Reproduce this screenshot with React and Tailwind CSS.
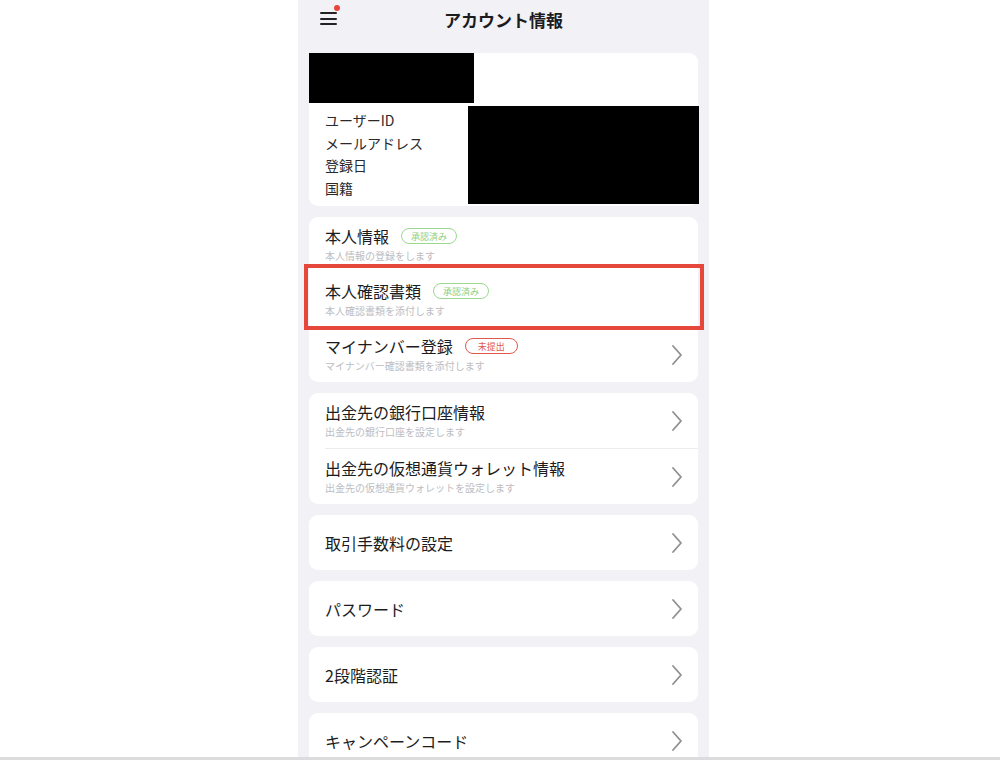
import React from 'react';

const font = { fontFamily: '"Noto Sans CJK JP", "Noto Sans", sans-serif' };

const Chevron = () => (
  <svg width="12" height="22" viewBox="0 0 12 22" className="shrink-0">
    <path d="M2 2 L10 11 L2 20" fill="none" stroke="#8e8e93" strokeWidth="1.8" strokeLinecap="round" strokeLinejoin="round" />
  </svg>
);

const Badge = ({ tone, children }) => (
  <span
    className={
      tone === 'green'
        ? 'ml-[12px] inline-flex h-[16px] items-center rounded-full border border-[#9ad98f] px-[9px] text-[9px] leading-none text-[#8fd183]'
        : 'ml-[12px] inline-flex h-[16px] items-center rounded-full border-[1.5px] border-[#e0574c] px-[12px] text-[9px] leading-none text-[#e0574c]'
    }
  >
    {children}
  </span>
);

const Row = ({ title, sub, badge, chevron = true, highlight = false }) => (
  <div className="relative flex h-[55px] items-center pl-[16px] pr-[15px]">
    <div className="flex flex-1 flex-col">
      <div className="flex items-center">
        <span className="text-[16px] leading-[20px] text-[#1c1c1e]">{title}</span>
        {badge}
      </div>
      {sub && <span className="mt-[3px] text-[10px] leading-[14px] text-[#bdbdc2]">{sub}</span>}
    </div>
    {chevron && <Chevron />}
    {highlight && (
      <div className="absolute -left-[5px] -right-[6px] -top-[8px] -bottom-[3px] border-[4px] border-[#e5473b]" />
    )}
  </div>
);

const SingleCard = ({ title }) => (
  <div className="overflow-hidden rounded-[9px] bg-white">
    <Row title={title} />
  </div>
);

export default function App() {
  return (
    <div className="min-h-screen w-full bg-white" style={font}>
      <div className="ml-[298px] flex h-[760px] w-[411px] flex-col overflow-hidden bg-[#f2f1f6]">
        {/* header */}
        <div className="relative flex h-[40px] shrink-0 items-center justify-center">
          <div className="absolute left-[22px] top-[12px] flex w-[17px] flex-col gap-[3.5px]">
            <span className="h-[2px] w-full rounded bg-[#222]" />
            <span className="h-[2px] w-full rounded bg-[#222]" />
            <span className="h-[2px] w-full rounded bg-[#222]" />
            <span className="absolute -right-[3px] -top-[7px] h-[6px] w-[6px] rounded-full bg-[#e8453c]" />
          </div>
          <span className="text-[17px] font-bold text-[#1c1c1e]">アカウント情報</span>
        </div>

        <div className="flex flex-col gap-[11px] px-[11px] pt-[13px]">
          {/* account card */}
          <div className="rounded-[9px] bg-white">
            <div className="h-[50px] w-[165px] bg-black" />
            <div className="flex pt-[3px] pb-[2px]">
              <div className="flex flex-1 flex-col pl-[16px] pt-[3px] text-[14px] leading-[22.7px] text-[#2a2a2c]">
                <span>ユーザーID</span>
                <span>メールアドレス</span>
                <span>登録日</span>
                <span>国籍</span>
              </div>
              <div className="mr-[-1px] h-[98px] w-[231px] bg-black" />
            </div>
          </div>

          {/* identity card */}
          <div className="rounded-[9px] bg-white">
            <Row title="本人情報" sub="本人情報の登録をします" badge={<Badge tone="green">承認済み</Badge>} chevron={false} />
            <Row title="本人確認書類" sub="本人確認書類を添付します" badge={<Badge tone="green">承認済み</Badge>} chevron={false} highlight />
            <Row title="マイナンバー登録" sub="マイナンバー確認書類を添付します" badge={<Badge tone="red">未提出</Badge>} />
          </div>

          {/* withdrawal card */}
          <div className="rounded-[9px] bg-white">
            <div className="ml-[16px] border-b border-[#ececef]">
              <div className="-ml-[16px]">
                <Row title="出金先の銀行口座情報" sub="出金先の銀行口座を設定します" />
              </div>
            </div>
            <Row title="出金先の仮想通貨ウォレット情報" sub="出金先の仮想通貨ウォレットを設定します" />
          </div>

          <SingleCard title="取引手数料の設定" />
          <SingleCard title="パスワード" />
          <SingleCard title="2段階認証" />
          <SingleCard title="キャンペーンコード" />
        </div>
      </div>
      <div className="fixed bottom-0 left-0 h-[3px] w-full bg-[#dcdcdc]" />
    </div>
  );
}
